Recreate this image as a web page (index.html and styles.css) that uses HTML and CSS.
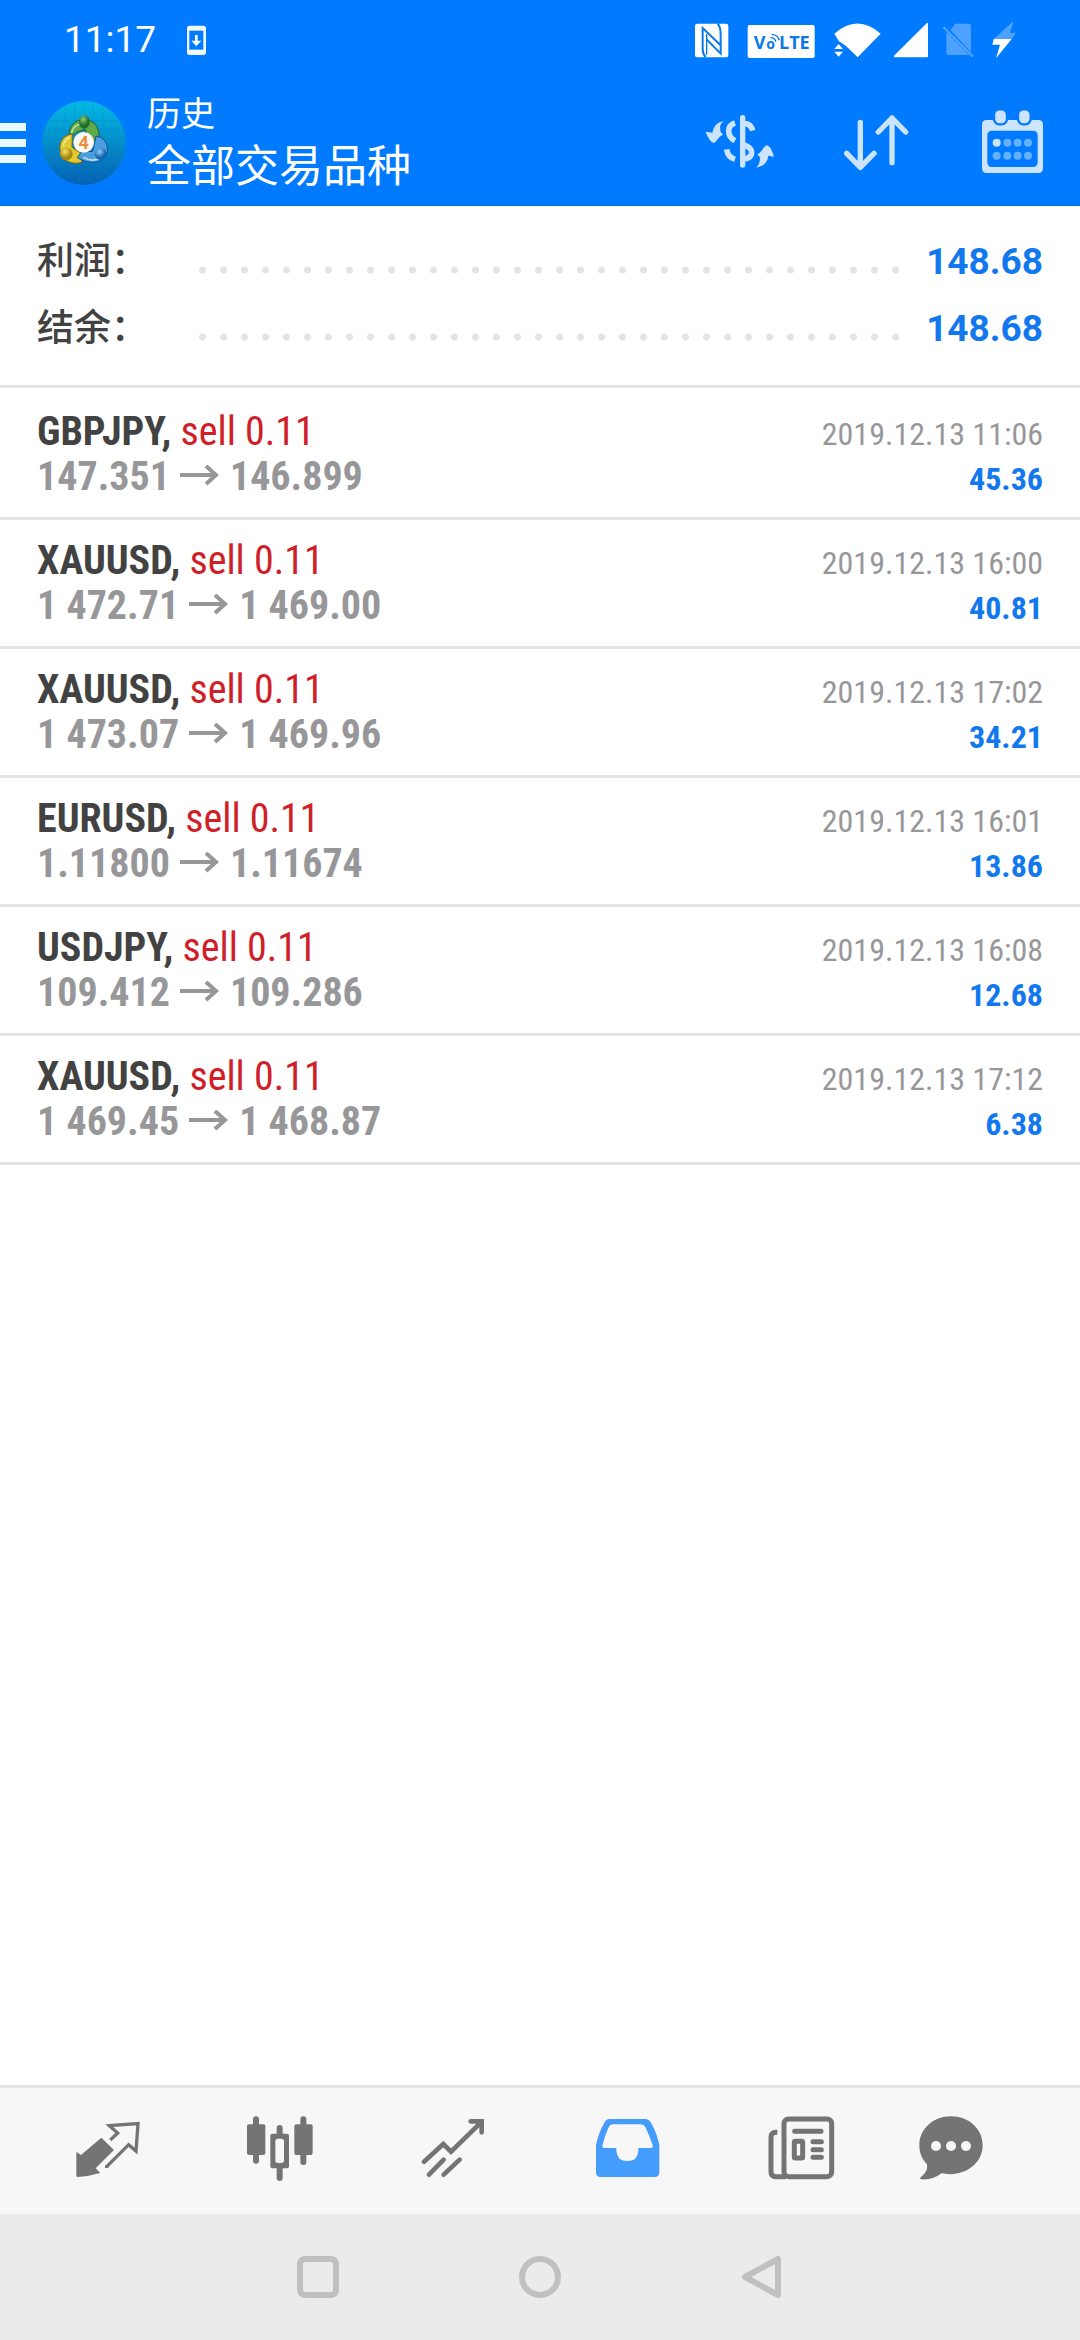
FILE: index.html
```html
<!DOCTYPE html>
<html lang="zh-CN">
<head>
<meta charset="utf-8">
<meta name="viewport" content="width=device-width, initial-scale=1">
<title>历史</title>
<link rel="stylesheet" href="styles.css">
</head>
<body>
<div class="app">
  <header class="top">
    <div class="status">
      <span class="clock">11:17</span>
      <svg class="download" viewBox="558 60 63 120" aria-hidden="true"><rect x="561" y="77" width="57" height="88" rx="8" fill="#f2fbff"/><rect x="568" y="92" width="42" height="57" fill="#007aff"/><path d="M585 105h8v17h11l-15 17-15-17h11z" fill="#f2fbff"/></svg>
      <div class="tray">
        <svg class="w36" viewBox="102 60 108 120" aria-label="NFC"><rect x="105" y="71" width="100" height="101" rx="7" fill="#fff"/><path d="M137 172c-7-8-9-15-9-25V84l54 52M173 71c7 8 9 18 9 32v58l-42-43" fill="none" stroke="#0a78e8" stroke-width="6"/><path d="M140 102v62" stroke="#0a78e8" stroke-width="4"/></svg>
        <svg class="w78" viewBox="246 60 234 120" aria-label="VoLTE"><rect x="263" y="75" width="201" height="99" rx="6" fill="#fff"/><g class="volte"><text x="281" y="146" font-size="54">V</text><text x="319" y="147" font-size="42">o</text><text x="357" y="146" font-size="54">LTE</text></g><path d="M331 113q12-2 17 12M335 104q17-1 23 17" fill="none" stroke="#0a78e8" stroke-width="4"/></svg>
        <svg class="w50" viewBox="516 60 150 120" aria-label="Wi-Fi"><path d="M523 101Q592 40 662 101L593 172 557 137 537 124z" fill="#fff"/><path d="M520 150v-8l17-16 16 16v8z" fill="#007aff"/><path d="M523 147l13-15 13 15zM523 155h26l-13 15z" fill="#fff"/></svg>
        <svg class="w36" viewBox="702 60 108 120" aria-label="信号"><path d="M804 69v100q0 3-3 3H704q-6 0-2-5l98-97z" fill="#fff"/></svg>
        <svg class="w34" viewBox="846 60 102 120" aria-label="无 SIM 卡"><path d="M886 71h41q6 0 6 6v79l-62-66zM859 96l69 69H865q-6 0-6-6z" fill="#4da2ff"/><path d="M850 81l89 89" stroke="#4da2ff" stroke-width="7"/></svg>
        <svg class="w30" viewBox="984 60 90 120" aria-label="充电"><path d="M1061 63l-11 35h18l-13 19h-54z" fill="#4da2ff"/><path d="M1001 117h54l-47 58 12-41h-23z" fill="#fff"/></svg>
      </div>
    </div>
    <div class="toolbar">
      <button class="menu" aria-label="菜单"><span></span><span></span><span></span></button>
      <svg class="logo" viewBox="126 303 252 252" role="img" aria-label="MetaTrader 4">
        <defs>
          <linearGradient id="sky" x1="0" y1="0" x2="0" y2="1"><stop offset="0" stop-color="#02b9e4"/><stop offset=".55" stop-color="#0589c6"/><stop offset="1" stop-color="#0462b4"/></linearGradient>
          <radialGradient id="green" cx=".4" cy=".3"><stop offset="0" stop-color="#8fca72"/><stop offset="1" stop-color="#1d6b28"/></radialGradient>
          <radialGradient id="gold" cx=".4" cy=".3"><stop offset="0" stop-color="#f6e76b"/><stop offset="1" stop-color="#a98510"/></radialGradient>
          <radialGradient id="blue" cx=".4" cy=".3"><stop offset="0" stop-color="#8fd0f8"/><stop offset="1" stop-color="#1567b4"/></radialGradient>
        </defs>
        <circle cx="252" cy="429" r="126" fill="url(#sky)"/>
        <path d="M168 340v180M196 320v220M224 310v240M252 305v248M280 310v240M308 320v220M336 340v180M145 362h214M132 390h240M128 418h248M128 446h248M132 474h240M145 502h214" stroke="#16b" stroke-opacity=".25" stroke-width="2"/>
        <path d="M208 412c-4-34 16-53 44-53s49 20 45 60l-20 14-22-45-25 9z" fill="#5fa94a" stroke="#205f2b" stroke-width="3"/>
        <path d="M217 402c-30 3-42 28-36 55 6 28 40 38 65 30l-4-28-26-17z" fill="#e1c92f" stroke="#77640f" stroke-width="3"/>
        <path d="M288 408c26 4 36 24 34 46-4 32-48 45-90 19l12-17 34-2z" fill="#4b9fe0" stroke="#124f8e" stroke-width="3"/>
        <path d="M214 398q8-26 34-26M190 440q2-22 20-28M250 472q30 18 56-2" fill="none" stroke="#e6f6d8" stroke-opacity=".7" stroke-width="5"/>
        <ellipse cx="253" cy="366" rx="16" ry="20" fill="url(#green)"/>
        <circle cx="199" cy="462" r="19" fill="url(#gold)"/>
        <circle cx="302" cy="462" r="18" fill="url(#blue)"/>
        <circle cx="251" cy="427" r="31" fill="#fbfaf5"/>
        <text class="four" x="251" y="446" font-size="54" text-anchor="middle">4</text>
      </svg>
      <div class="titles">
        <h1>历史</h1>
        <p>全部交易品种</p>
      </div>
      <div class="actions">
        <button aria-label="交易品种"><svg viewBox="132 321 216 216"><g fill="#cce4ff"><rect x="240" y="345" width="16" height="158" rx="8"/><path d="M191 363c-14 11-11 22-9 33l8 9c-12 1-15 14-29 25-11-7-18-18-24-35l20 3c5-18 12-31 34-35zM289 503c10-10 11-20 11-31l-8-9c12-4 18-25 29-27 9 2 15 15 21 34l-17-3c-3 22-16 32-36 36z"/></g><path d="M225 369q-19 6-19 23 0 20 19 30M200 448q3 23 25 30M253 371q20 0 25 21M253 435q22 8 22 22 0 17-22 20" fill="none" stroke="#cce4ff" stroke-width="17"/></svg></button>
        <button aria-label="排序"><svg viewBox="540 321 216 216"><path d="M601 367v135M560 460l41 42 41-42M696 488V354M655 396l41-42 41 42" fill="none" stroke="#cce4ff" stroke-width="16" stroke-linecap="round" stroke-linejoin="round"/></svg></button>
        <button aria-label="日历"><svg viewBox="948 321 216 216"><path fill-rule="evenodd" d="M980 360h155q14 0 14 14v131q0 14-14 14H980q-14 0-14-14V374q0-14 14-14zm16 32q-14 0-14 14v80q0 15 14 15h123q14 0 14-15v-80q0-14-14-14z" fill="#cce4ff"/><g fill="#cce4ff" stroke="#007aff" stroke-width="7"><rect x="1002" y="328" width="39" height="45" rx="16"/><rect x="1074" y="328" width="38" height="45" rx="16"/></g><circle cx="1010" cy="428" r="12" fill="#cce4ff"/><g fill="#66afff"><circle cx="1042" cy="428" r="12"/><circle cx="1073" cy="428" r="12"/><circle cx="1104" cy="428" r="12"/><circle cx="1010" cy="467" r="12"/><circle cx="1042" cy="467" r="12"/><circle cx="1073" cy="467" r="12"/><circle cx="1104" cy="467" r="12"/></g></svg></button>
      </div>
    </div>
  </header>

  <main>
    <dl class="summary">
      <div><dt>利润：</dt><dd>148.68</dd></div>
      <div><dt>结余：</dt><dd>148.68</dd></div>
    </dl>
    <svg class="defs" aria-hidden="true"><symbol id="arrow" viewBox="0 0 40 24"><path d="M0 10h37M26 1l10 9-10 9" fill="none" stroke="#97979a" stroke-width="4"/></symbol></svg>
    <ul class="deals">
      <li><p class="deal"><b>GBPJPY,</b> <span>sell 0.11</span></p><time>2019.12.13 11:06</time><p class="price">147.351<svg><use href="#arrow"/></svg>146.899</p><p class="profit">45.36</p></li>
      <li><p class="deal"><b>XAUUSD,</b> <span>sell 0.11</span></p><time>2019.12.13 16:00</time><p class="price">1 472.71<svg><use href="#arrow"/></svg>1 469.00</p><p class="profit">40.81</p></li>
      <li><p class="deal"><b>XAUUSD,</b> <span>sell 0.11</span></p><time>2019.12.13 17:02</time><p class="price">1 473.07<svg><use href="#arrow"/></svg>1 469.96</p><p class="profit">34.21</p></li>
      <li><p class="deal"><b>EURUSD,</b> <span>sell 0.11</span></p><time>2019.12.13 16:01</time><p class="price">1.11800<svg><use href="#arrow"/></svg>1.11674</p><p class="profit">13.86</p></li>
      <li><p class="deal"><b>USDJPY,</b> <span>sell 0.11</span></p><time>2019.12.13 16:08</time><p class="price">109.412<svg><use href="#arrow"/></svg>109.286</p><p class="profit">12.68</p></li>
      <li><p class="deal"><b>XAUUSD,</b> <span>sell 0.11</span></p><time>2019.12.13 17:12</time><p class="price">1 469.45<svg><use href="#arrow"/></svg>1 468.87</p><p class="profit">6.38</p></li>
    </ul>
  </main>

  <nav class="tabs">
    <button aria-label="行情"><svg viewBox="92 135 216 216"><path d="M183 203l38 37-55 55 14 14q-30 9-68 12-4 0-4-5v-70l14 9z" fill="#747474"/><path d="M210 210l22-21-25-22 86-6-6 82-22-19-66 66" fill="none" stroke="#747474" stroke-width="10"/><path d="M194 290h10" stroke="#747474" stroke-width="8"/></svg></button>
    <button aria-label="图表"><svg viewBox="613 135 216 216"><path d="M649 148v124M791 148v128M720 174v24M720 290v34" stroke="#747474" stroke-width="18" stroke-linecap="round"/><g fill="#747474"><rect x="622" y="163" width="55" height="92" rx="6"/><rect x="764" y="163" width="55" height="92" rx="6"/><rect x="692" y="191" width="56" height="104" rx="6"/></g><rect x="707" y="206" width="26" height="73" rx="8" fill="#f7f7f7"/></svg></button>
    <button aria-label="交易"><svg viewBox="1134 135 216 216"><path d="M1152 275l58-53 23 23 90-88M1292 154h33v33M1167 314l44-45M1211 314l48-45" fill="none" stroke="#747474" stroke-width="14" stroke-linecap="round"/></svg></button>
    <button aria-label="历史" aria-current="page"><svg viewBox="95 135 216 216"><path fill-rule="evenodd" d="M148 147h107q11 0 17 11 19 33 25 68v81q0 14-14 14H121q-14 0-14-14v-81q6-35 25-68 5-11 16-11zm11 16q-10 0-14 9-13 28-19 55 0 7 8 7h34v8q2 31 33 31 31 0 33-31v-8h37q8 0 6-8-9-28-22-55-5-8-14-8z" fill="#449cfc"/></svg></button>
    <button aria-label="新闻"><svg viewBox="616 135 216 216"><g fill="none" stroke="#747474"><rect x="673" y="147" width="143" height="173" rx="14" stroke-width="15"/><path d="M653 187h-4q-15 0-15 15v104q0 14 15 14h30" stroke-width="15"/><g stroke-width="15" stroke-linecap="round"><path d="M705 184h79M760 215h25M760 239h25M760 262h25"/></g><rect x="704" y="214" width="25" height="50" rx="3" stroke-width="15"/></g></svg></button>
    <button aria-label="消息"><svg viewBox="1065 135 216 216"><path d="M1173 139c54 0 95 38 95 87 0 56-55 97-123 84-20 15-42 20-60 18q-9-1-2-7c16-13 20-23 18-38-15-16-23-34-23-57 0-49 41-87 95-87z" fill="#747474"/><g fill="#f7f7f7"><circle cx="1128" cy="228" r="15"/><circle cx="1173" cy="228" r="15"/><circle cx="1218" cy="228" r="15"/></g></svg></button>
  </nav>
  <div class="system">
    <button aria-label="最近任务"><svg viewBox="0 0 44 44"><rect x="4" y="4" width="36" height="36" rx="5"/></svg></button>
    <button aria-label="主屏幕"><svg viewBox="0 0 44 44"><circle cx="22" cy="22" r="18"/></svg></button>
    <button aria-label="返回"><svg viewBox="0 0 44 44"><path d="M38 4v36L5 22z"/></svg></button>
  </div>
</div>
</body>
</html>
```
FILE: styles.css
```css
* {
  box-sizing: border-box;
}

body,
h1,
p,
ul,
dl,
dd {
  margin: 0;
  padding: 0;
}

body {
  background: #fff;
  font-family: Roboto, "Noto Sans CJK SC", sans-serif;
}

button {
  display: flex;
  align-items: center;
  justify-content: center;
  margin: 0;
  padding: 0;
  border: 0;
  background: none;
  font: inherit;
}

svg {
  display: block;
}

.app {
  display: flex;
  flex-direction: column;
  min-height: 100vh;
}

.top {
  background: #007aff;
  color: #fff;
}

/* status bar */
.status {
  display: flex;
  align-items: center;
  height: 80px;
  padding: 0 62px 0 64px;
}

.clock {
  font-size: 37px;
  line-height: 80px;
}

.download {
  width: 21px;
  height: 40px;
  margin-left: 30px;
}

.tray {
  display: flex;
  gap: 12px;
  margin-left: auto;
}

.tray svg {
  height: 40px;
}

.w30 { width: 30px; }
.w34 { width: 34px; }
.w36 { width: 36px; }
.w50 { width: 50px; }
.w78 { width: 78px; }

.volte {
  fill: #0a78e8;
  font-family: "Open Sans", sans-serif;
  font-weight: 700;
}

/* toolbar */
.toolbar {
  display: flex;
  align-items: center;
  height: 126px;
  border-bottom: 1px solid #0a6fdc;
}

.menu {
  flex-direction: column;
  align-items: flex-start;
  gap: 8px;
  width: 42px;
  height: 84px;
}

.menu span {
  width: 26px;
  height: 8px;
  background: #eaf8ff;
}

.logo {
  width: 84px;
  height: 84px;
}

.four {
  fill: #f08a3c;
  font-weight: 700;
}

.titles {
  flex: 1;
  margin-left: 21px;
}

.titles h1 {
  font-size: 34px;
  font-weight: 400;
  line-height: 48px;
}

.titles p {
  font-size: 44px;
  line-height: 58px;
}

.actions {
  display: flex;
}

.actions button {
  width: 136px;
  height: 120px;
}

.actions svg,
.tabs svg {
  width: 72px;
  height: 72px;
}

main {
  flex: 1;
}

/* totals */
.summary {
  padding: 22px 37px 23px;
  border-bottom: 3px solid #e4e4e4;
  line-height: 67px;
}

.summary div {
  display: flex;
}

.summary dt {
  width: 155px;
  color: #424242;
  font-size: 37px;
  font-weight: 500;
}

.summary dd {
  display: flex;
  flex: 1;
  color: #1278ee;
  font-size: 37px;
  font-weight: 700;
}

.summary dd::before {
  content: "";
  flex: 1;
  margin-right: 20px;
  background: radial-gradient(circle, #e3e3e3 3px, transparent 4px) 0 38px / 21px 8px round no-repeat;
}

/* deals */
.defs {
  position: absolute;
  width: 0;
  height: 0;
}

.deals {
  padding-top: 3px;
  list-style: none;
  font-family: "Roboto Condensed", Roboto, sans-serif;
  font-size: 40px;
  line-height: 45px;
}

.deals li {
  display: grid;
  grid-template-columns: 1fr auto;
  align-items: baseline;
  padding: 18px 37px;
  border-bottom: 3px solid #e4e4e4;
}

.deal {
  color: #424242;
}

.deal span {
  color: #d02027;
}

.deals time,
.profit {
  font-size: 32px;
  line-height: 36px;
  text-align: right;
}

.deals time {
  color: #97979a;
}

.price {
  display: flex;
  align-items: center;
  gap: 10px;
  color: #97979a;
  font-weight: 700;
}

.price svg {
  width: 40px;
  height: 24px;
}

.profit {
  color: #1278ee;
  font-weight: 700;
}

/* bottom tabs */
.tabs {
  display: grid;
  grid-template-columns: repeat(5, 1fr) 126px;
  padding: 0 66px 0 20px;
  border-top: 3px solid #e4e4e4;
  background: #f7f7f7;
}

.tabs button {
  height: 126px;
}

.system {
  display: flex;
  justify-content: center;
  gap: 178px;
  height: 126px;
  background: #ebebeb;
}

.system svg {
  width: 44px;
  height: 44px;
  fill: none;
  stroke: #c0c0c0;
  stroke-width: 6px;
  stroke-linejoin: round;
}
```
